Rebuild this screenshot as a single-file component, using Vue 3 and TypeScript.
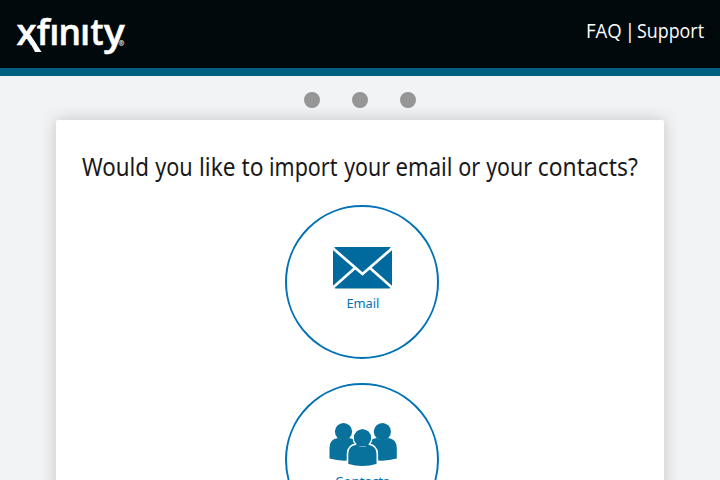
<script setup lang="ts">
interface Word {
  text: string
  x: number
  width: number
}

const heading: Word[] = [
  { text: 'Would', x: 1, width: 67 },
  { text: 'you', x: 74.2, width: 37.5 },
  { text: 'like', x: 118, width: 36.5 },
  { text: 'to', x: 160.6, width: 22 },
  { text: 'import', x: 188, width: 68.5 },
  { text: 'your', x: 263.2, width: 45.8 },
  { text: 'email', x: 314.5, width: 57 },
  { text: 'or', x: 377.3, width: 22 },
  { text: 'your', x: 405.2, width: 45.8 },
  { text: 'contacts?', x: 456.8, width: 100 },
]

const steps: number[] = [1, 2, 3]
</script>

<template>
  <div class="page">
    <header class="header">
      <svg class="logo" width="110" height="38" viewBox="0 0 110 38">
        <path d="M8.5 16 L14.5 19 L25.5 36 H19Z" />
        <text y="28.5" class="word">
          <tspan x="0.5" textLength="20" lengthAdjust="spacingAndGlyphs">x</tspan>
          <tspan x="20.7" textLength="13" lengthAdjust="spacingAndGlyphs">f</tspan>
          <tspan x="33.2">ı</tspan>
          <tspan x="42.5" textLength="22.5" lengthAdjust="spacingAndGlyphs">n</tspan>
          <tspan x="64">ı</tspan>
          <tspan x="74.5" textLength="13" lengthAdjust="spacingAndGlyphs">t</tspan>
          <tspan x="87.8" textLength="21" lengthAdjust="spacingAndGlyphs">y</tspan>
        </text>
        <text x="102.4" y="30" class="mark">®</text>
      </svg>
      <svg class="links" width="120" height="30" viewBox="0 0 120 30">
        <text y="22">
          <tspan x="1.9" textLength="35.8" lengthAdjust="spacingAndGlyphs">FAQ</tspan>
          <tspan x="40.5">|</tspan>
          <tspan x="53" textLength="67" lengthAdjust="spacingAndGlyphs">Support</tspan>
        </text>
      </svg>
    </header>

    <div class="steps">
      <span v-for="step in steps" :key="step" class="dot"></span>
    </div>

    <main class="card">
      <svg class="heading" width="558" height="40" viewBox="0 0 558 40">
        <text y="28">
          <tspan
            v-for="(word, i) in heading"
            :key="i"
            :x="word.x"
            :textLength="word.width"
            lengthAdjust="spacingAndGlyphs"
          >{{ word.text }}</tspan>
        </text>
      </svg>

      <div class="choices">
        <button class="choice" type="button">
          <svg class="envelope" width="60" height="42" viewBox="0 0 60 42">
            <rect x="1" width="59" height="41.5" rx="3" />
            <path d="M0 0.5 L30.5 27 L61 0.5 M1 40.5 L23 21 M60 40.5 L38 21" />
          </svg>
          <svg class="label" width="60" height="20" viewBox="0 0 60 20">
            <text x="14.4" y="14" textLength="33" lengthAdjust="spacingAndGlyphs">Email</text>
          </svg>
        </button>
        <button class="choice" type="button">
          <svg class="people" width="68" height="44" viewBox="0 0 68 44">
            <g>
              <circle cx="14.5" cy="8.6" r="8.6" />
              <path d="M0.5 35.5 V25 Q0.5 16 9 15 Q14 19 20 15 Q28.5 16 28.5 25 V36 Q14 39.5 0.5 35.5Z" />
            </g>
            <g>
              <circle cx="53.4" cy="8.6" r="8.6" />
              <path d="M39 36 V25 Q39 16 47.5 15 Q53.5 19 59 15 Q67.8 16 67.8 25 V35.5 Q54 39.5 39 36Z" />
            </g>
            <g class="front">
              <circle cx="33.5" cy="14.8" r="9.2" />
              <path d="M18.5 41.5 V31 Q18.5 22 27.5 21 Q33.5 25 39 21 Q48.3 22 48.3 31 V41.5 Q33.5 46 18.5 41.5Z" />
              <circle class="inner" cx="33.5" cy="14.8" r="8.6" />
              <path class="inner" d="M28 19.5 H39 L40 23 H27Z" />
            </g>
          </svg>
          <svg class="label" width="60" height="20" viewBox="0 0 60 20">
            <text x="3" y="14" textLength="54.5" lengthAdjust="spacingAndGlyphs">Contacts</text>
          </svg>
        </button>
      </div>
    </main>
  </div>
</template>

<style>
body {
  overflow: hidden;
}
</style>

<style scoped>
.page {
  height: 480px;
  overflow: hidden;
  display: flex;
  flex-direction: column;
  background: #f2f3f5;
  font-family: 'Noto Sans', 'Open Sans', sans-serif;
}

svg {
  display: block;
  flex: none;
  overflow: visible;
}

.header {
  box-sizing: border-box;
  flex: none;
  height: 76px;
  padding: 16px 16px 0;
  display: flex;
  justify-content: space-between;
  background: #02090c;
  border-bottom: 8px solid #006080;
}

.logo {
  fill: #fff;
}

.word {
  font-family: 'Open Sans', sans-serif;
  font-size: 36.5px;
  font-weight: 600;
  stroke: #fff;
  stroke-width: 0.5;
}

.mark {
  font-size: 7px;
  font-weight: 700;
}

.links {
  fill: #fff;
  font-family: 'Open Sans', sans-serif;
  font-size: 19.5px;
}

.steps {
  flex: none;
  height: 44px;
  padding-top: 16px;
  box-sizing: border-box;
  display: flex;
  justify-content: center;
  gap: 32px;
}

.dot {
  width: 16px;
  height: 16px;
  border-radius: 50%;
  background: #969696;
}

.card {
  flex: none;
  height: 480px;
  margin: 0 56px;
  padding-top: 28px;
  box-sizing: border-box;
  display: flex;
  flex-direction: column;
  align-items: center;
  background: #fff;
  border-radius: 2px;
  box-shadow: 0 0 16px rgba(0, 0, 0, 0.2);
}

.heading {
  fill: #191919;
  font-size: 25px;
}

.choices {
  padding: 17px 0 0 4px;
  display: flex;
  flex-direction: column;
  gap: 24px;
}

.choice {
  width: 154px;
  height: 154px;
  padding: 0;
  box-sizing: border-box;
  display: flex;
  flex-direction: column;
  align-items: center;
  border: 2px solid #0272b6;
  border-radius: 50%;
  background: #fff;
  font-family: inherit;
}

.envelope {
  margin: 40px 0 5px;
  overflow: hidden;
  fill: #006a9e;
}

.envelope path {
  fill: none;
  stroke: #fff;
  stroke-width: 2.7;
}

.people {
  margin: 38px 0 5px 2px;
  fill: #08719c;
}

.front {
  stroke: #fff;
  stroke-width: 1.6;
}

.front .inner {
  stroke: none;
}

.label {
  fill: #0272b6;
  font-size: 13px;
}
</style>
